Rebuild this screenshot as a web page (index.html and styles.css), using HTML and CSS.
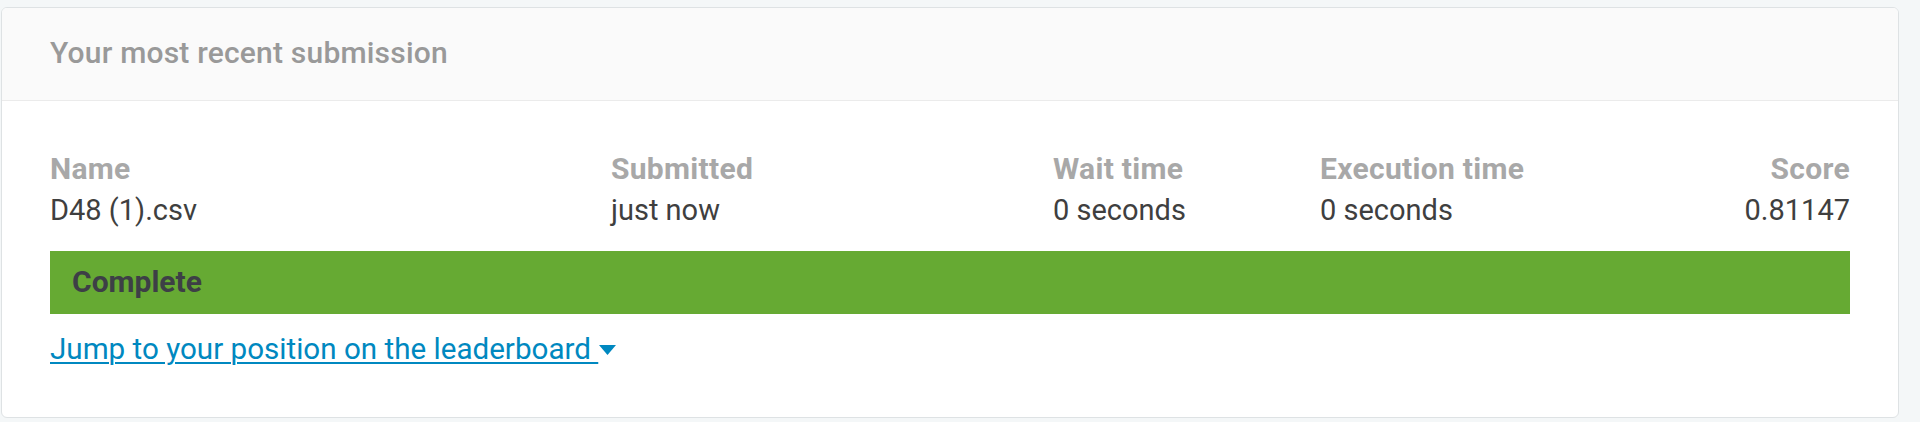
FILE: index.html
```html
<!DOCTYPE html>
<html>
<head>
<meta charset="utf-8">
<link rel="stylesheet" href="styles.css">
</head>
<body>
<div class="page">
  <section class="card">
    <header class="card-header">Your most recent submission</header>
    <div class="card-body">
      <div class="sub-grid">
        <div class="col-label">Name</div>
        <div class="col-label">Submitted</div>
        <div class="col-label">Wait time</div>
        <div class="col-label">Execution time</div>
        <div class="col-label right">Score</div>
        <div class="col-value">D48 (1).csv</div>
        <div class="col-value">just now</div>
        <div class="col-value">0 seconds</div>
        <div class="col-value">0 seconds</div>
        <div class="col-value right">0.81147</div>
      </div>
      <div class="status-bar">Complete</div>
      <a class="jump-link" href="#"><span class="jump-text">Jump to your position on the leaderboard </span><svg class="caret" width="17" height="10" viewBox="0 0 17 10"><path d="M0 0H17L8.5 10Z" fill="#0088c0"/></svg></a>
    </div>
  </section>
</div>
</body>
</html>
```

FILE: styles.css
```css
html, body {
  margin: 0;
  padding: 0;
  background: #f4f7f8;
}

body {
  font-family: Roboto, "Liberation Sans", Arial, sans-serif;
  font-size: 30px;
  line-height: 36px;
  color: #3f3f3f;
}

.page {
  padding: 7px 21px 4px 1px;
}

.card {
  width: 1898px;
  box-sizing: border-box;
  background: #ffffff;
  border: 1px solid #dee2e4;
  border-radius: 6px;
  overflow: hidden;
}

.card-header {
  background: #fafafa;
  border-bottom: 1px solid #ebebeb;
  padding: 27px 48px 29px;
  color: #999999;
  font-weight: 500;
  letter-spacing: 0.2px;
}

.card-body {
  padding: 50px 48px 50px;
  display: flex;
  flex-direction: column;
  align-items: flex-start;
}

.sub-grid {
  display: grid;
  grid-template-columns: 561px 442px 267px 1fr auto;
  row-gap: 5px;
  width: 100%;
}

.col-label {
  color: #a8a8a8;
  font-weight: 700;
  letter-spacing: 0.3px;
}

.col-value {
  color: #3f3f3f;
  font-size: 29px;
}

.right {
  text-align: right;
}

.status-bar {
  align-self: stretch;
  margin-top: 23px;
  background: #66aa33;
  color: #3d3f46;
  font-weight: 700;
  padding: 13px 22px 14px;
}

.jump-link {
  margin-top: 17px;
  color: #0088c0;
  font-size: 29.6px;
  text-decoration: none;
  display: inline-flex;
  align-items: center;
}

.jump-text {
  text-decoration: underline;
  text-underline-offset: 3px;
  text-decoration-thickness: 2px;
  white-space: pre;
}

.caret {
  margin-left: 1px;
  margin-top: 2px;
}
```
